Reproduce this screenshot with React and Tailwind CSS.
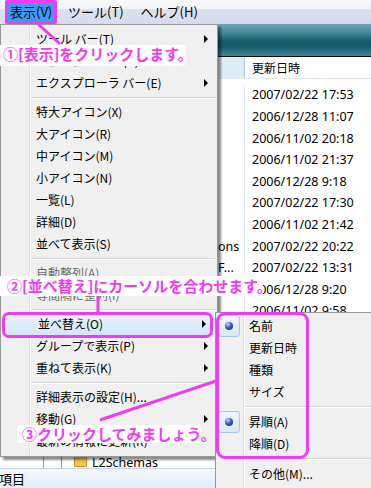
import React from "react";

const jp = "font-['Noto_Sans_CJK_JP','Noto_Sans',sans-serif]";

// View menu entries: item rows, separators and disabled rows
const menuItems = [
  { label: "ツール バー(T)", sub: true },
  { label: "ステータス バー(B)" },
  { label: "エクスプローラ バー(E)", sub: true },
  { sep: true },
  { label: "特大アイコン(X)" },
  { label: "大アイコン(R)" },
  { label: "中アイコン(M)" },
  { label: "小アイコン(N)" },
  { label: "一覧(L)" },
  { label: "詳細(D)" },
  { label: "並べて表示(S)" },
  { sep: true },
  { label: "自動整列(A)", disabled: true },
  { label: "等間隔に整列(I)", disabled: true },
  { sep: true },
  { label: "並べ替え(O)", sub: true, active: true },
  { label: "グループで表示(P)", sub: true },
  { label: "重ねて表示(K)", sub: true },
  { sep: true },
  { label: "詳細表示の設定(H)..." },
  { label: "移動(G)", sub: true },
  { label: "最新の情報に更新(R)" },
];

const sortItems = [
  { label: "名前", radio: true },
  { label: "更新日時" },
  { label: "種類" },
  { label: "サイズ" },
  { sep: true },
  { label: "昇順(A)", radio: true },
  { label: "降順(D)" },
  { sep: true },
  { label: "その他(M)..." },
];

const rows = [
  { date: "2007/02/22 17:53" },
  { date: "2006/12/28 11:07" },
  { date: "2006/11/02 20:18" },
  { date: "2006/11/02 21:37" },
  { date: "2006/12/28 9:18" },
  { date: "2007/02/22 17:30" },
  { date: "2006/11/02 21:42" },
  { date: "2007/02/22 20:22", name: "ons" },
  { date: "2007/02/22 13:31", name: "F..." },
  { date: "2006/12/28 9:20" },
  { date: "2006/11/02 9:58" },
  { date: "2006/11/02 10:12" },
  { date: "2006/11/02 10:40" },
  { date: "2007/02/22 13:05" },
  { date: "2006/12/28 9:11" },
  { date: "2006/11/02 21:10" },
  { date: "2007/02/22 17:20" },
  { date: "2006/11/02 20:55", folder: "L2Schemas" },
];

const Arrow = () => (
  <span className="ml-auto mr-[9px] w-0 h-0 border-y-[4px] border-y-transparent border-l-[4px] border-l-black" />
);

const Separator = ({ left, h }) => (
  <div className={`flex items-center pr-[2px] ${left} ${h}`}>
    <div className="w-full border-t border-t-[#d7d7d7] border-b border-b-white" />
  </div>
);

const RadioBall = () => (
  <div className="absolute left-[2px] top-0 w-[22px] h-[22px] rounded-[3px] border border-[#a8c8ec] bg-[linear-gradient(to_bottom,#eef5fd,#d9e8f8)] flex items-center justify-center">
    <div className="w-[8px] h-[8px] rounded-full bg-[radial-gradient(circle_at_35%_30%,#c9d8ff_0%,#3b5fb8_45%,#0d1f5c_100%)]" />
  </div>
);

export default function App() {
  return (
    <div className={`relative w-[371px] h-[488px] overflow-hidden bg-white flex flex-col ${jp}`}>
      {/* menu bar */}
      <div className="h-[24px] shrink-0 flex items-center text-[13px] text-black bg-[linear-gradient(to_bottom,#f9fafd_0%,#f3f5fa_35%,#dce1f0_40%,#d6dcee_100%)]">
        <div className="ml-[5px] h-[24px] w-[52px] flex items-center pl-[2px] bg-[#3a9cf6] border-[3px] border-[#f03cf0] rounded-[2px]">
          表示(V)
        </div>
        <div className="ml-[11px]">ツール(T)</div>
        <div className="ml-[17px]">ヘルプ(H)</div>
      </div>

      {/* address / toolbar band */}
      <div className="h-[32px] shrink-0 bg-[linear-gradient(to_bottom,#6ea6b3_0%,#3f8593_30%,#1a5f6e_50%,#175b6a_70%,#3b8692_100%)]" />
      <div className="h-px shrink-0 bg-black" />

      {/* column header */}
      <div className="h-[22px] shrink-0 flex text-[12px] border-b border-[#e3e8ef]">
        <div className="w-[245px] flex">
          <div className="w-[220px] bg-[#f0f0f0]" />
          <div className="flex-1 bg-[#dcebf8] border-r border-[#9ccbe8]" />
        </div>
        <div className="pl-[7px] flex items-center">更新日時</div>
      </div>

      {/* file list */}
      <div className="flex-1 overflow-hidden pt-[6px]">
        {rows.map((r, i) => (
          <div key={i} className="h-[21.6px] flex items-center text-[12.5px] font-['Noto_Sans',sans-serif] text-black">
            <div className="w-[245px] h-full flex items-center border-r border-[#e4eef8] relative">
              {r.name && <span className="absolute left-[218px]">{r.name}</span>}
              {r.folder && (
                <>
                  <span className="absolute left-[43px] top-[1px] w-[19px] h-[16px] border border-[#9a9a9a] bg-white" />
                  <span className="absolute left-[74px] top-[3px] w-[13px] h-[12px] bg-[#f2c94c] border border-[#c9962a] rounded-[1px]" />
                  <span className="absolute left-[92px]">{r.folder}</span>
                </>
              )}
            </div>
            <div className="pl-[7px]">{r.date}</div>
          </div>
        ))}
      </div>

      {/* status bar */}
      <div className="h-[20px] shrink-0 flex items-center text-[13px] -ml-[1px] border-t border-[#c9d6e6] bg-[linear-gradient(to_bottom,#f4f8fc,#e2ecf7)]">
        項目
      </div>

      {/* View dropdown */}
      <div className="absolute left-0 top-[24px] w-[218px] pt-[3px] pb-[4px] bg-[#f0f0f0] border border-[#979797] shadow-[3px_3px_2px_rgba(0,0,0,0.45)] text-[12px]">
        <div className="absolute left-[28px] top-0 bottom-0 border-l border-l-[#e2e3e3] border-r border-r-white" />
        {menuItems.map((m, i) =>
          m.sep ? (
            <Separator key={i} left="pl-[31px]" h="h-[7px]" />
          ) : (
            <div
              key={i}
              className={`relative h-[22px] flex items-center pl-[35px] ${
                m.disabled ? "text-[#6d6d6d]" : "text-black"
              } ${m.active ? "mx-[2px] pl-[33px] rounded-[3px] bg-[linear-gradient(to_bottom,#eaf3fc,#d3e5f8)]" : ""}`}
            >
              {m.label}
              {m.sub && <Arrow />}
            </div>
          )
        )}
      </div>

      {/* sort submenu */}
      <div className="absolute left-[215px] top-[312px] w-[170px] pt-[2px] pb-[3px] bg-[#f0f0f0] border border-[#979797] text-[12px] text-black">
        <div className="absolute left-[27px] top-0 bottom-0 border-l border-l-[#e2e3e3] border-r border-r-white" />
        {sortItems.map((s, i) =>
          s.sep ? (
            <Separator key={i} left="pl-[29px]" h="h-[8px]" />
          ) : (
            <div key={i} className="relative h-[22px] flex items-center pl-[33px]">
              {s.radio && <RadioBall />}
              {s.label}
            </div>
          )
        )}
      </div>

      {/* callout frames */}
      <div className="absolute left-[2px] top-[312px] w-[211px] h-[26px] rounded-[7px] border-[3px] border-[#f03cf0]" />
      <div className="absolute left-[216px] top-[312px] w-[93px] h-[147px] rounded-[9px] border-[3px] border-[#f03cf0]" />

      {/* pointer lines */}
      <svg className="absolute inset-0" width="371" height="488">
        <line x1="38" y1="24" x2="60" y2="44" stroke="#f03cf0" strokeWidth="3" />
        <line x1="98" y1="295" x2="98" y2="313" stroke="#f03cf0" strokeWidth="3" />
        <line x1="100" y1="420" x2="216" y2="381" stroke="#f03cf0" strokeWidth="3" />
      </svg>

      {/* instructions */}
      <div className="absolute left-0 top-[45px] w-[186px] h-[21px] pl-[3px] pb-[2px] flex items-center bg-white rounded-r-[4px] text-[15px] font-bold text-[#f03cf0] whitespace-nowrap">
        ①[表示]をクリックします。
      </div>
      <div className="absolute left-0 top-[276px] w-[263px] h-[20px] pl-[7px] flex items-center bg-white rounded-r-[4px] text-[15px] font-bold text-[#f03cf0] whitespace-nowrap">
        ②[並べ替え]にカーソルを合わせます。
      </div>
      <div className="absolute left-[17px] top-[425px] w-[184px] h-[18px] pl-[5px] flex items-center bg-white rounded-[4px] text-[15px] font-bold text-[#f03cf0] whitespace-nowrap">
        ③クリックしてみましょう。
      </div>
    </div>
  );
}
